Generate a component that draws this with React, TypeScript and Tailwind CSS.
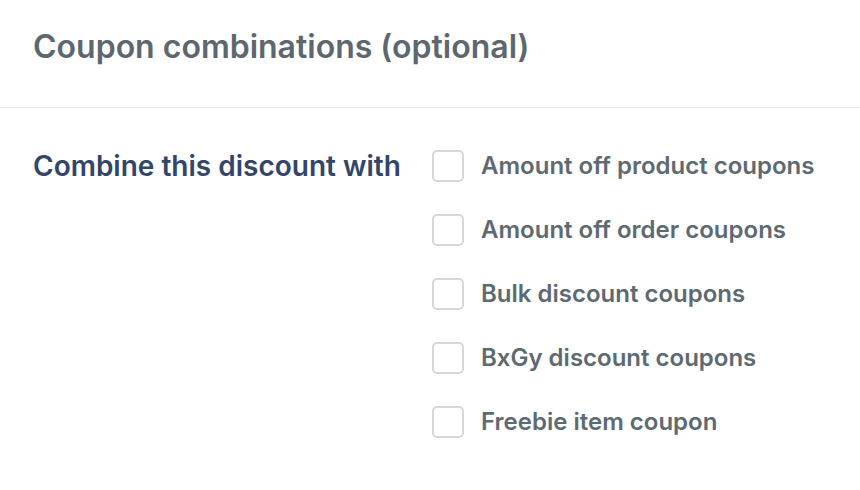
import React from "react";

const items = [
  "Amount off product coupons",
  "Amount off order coupons",
  "Bulk discount coupons",
  "BxGy discount coupons",
  "Freebie item coupon",
];

export default function App() {
  return (
    <div
      className="w-[860px] h-[490px] bg-white"
      style={{ fontFamily: "Inter, 'Noto Sans', sans-serif" }}
    >
      <div className="h-[108px] px-[33px] pt-[31px] border-b border-[#e8e9ea]">
        <h2 className="text-[32px] font-semibold text-[#5c676f] leading-none">
          Coupon combinations (optional)
        </h2>
      </div>
      <div className="flex px-[33px] pt-[42px]">
        <div className="w-[399px] h-[32px] flex items-center text-[28px] font-semibold text-[#34456a] whitespace-nowrap">
          Combine this discount with
        </div>
        <div className="flex flex-col gap-[32px]">
          {items.map((t) => (
            <label key={t} className="flex items-center h-[32px] gap-[17px]">
              <span className="w-[32px] h-[32px] rounded-[5px] border-2 border-[#d5d8db] bg-white shrink-0" />
              <span className="text-[24px] font-semibold text-[#5e6a71] whitespace-nowrap">{t}</span>
            </label>
          ))}
        </div>
      </div>
    </div>
  );
}
